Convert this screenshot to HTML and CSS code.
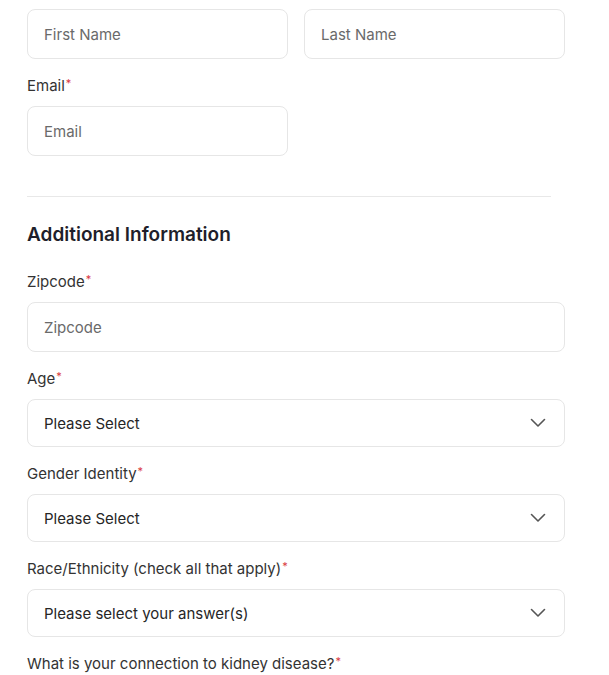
FILE: index.html
```html
<!DOCTYPE html>
<html>
<head>
<meta charset="utf-8">
<link rel="stylesheet" href="styles.css">
</head>
<body>
<form class="form">
  <div class="row">
    <div class="field"><div class="input placeholder">First Name</div></div>
    <div class="field"><div class="input placeholder">Last Name</div></div>
  </div>
  <div class="group">
    <label class="label">Email<span class="req">*</span></label>
    <div class="row">
      <div class="field"><div class="input placeholder">Email</div></div>
      <div class="field"></div>
    </div>
  </div>
  <hr class="divider">
  <h2 class="heading">Additional Information</h2>
  <div class="group group-first">
    <label class="label">Zipcode<span class="req">*</span></label>
    <div class="input placeholder">Zipcode</div>
  </div>
  <div class="group">
    <label class="label">Age<span class="req">*</span></label>
    <div class="input select">Please Select<svg class="chev" width="16" height="10" viewBox="0 0 16 10"><path d="M1.5 1.5 L8 8 L14.5 1.5" fill="none" stroke="#555" stroke-width="1.6" stroke-linecap="round" stroke-linejoin="round"/></svg></div>
  </div>
  <div class="group">
    <label class="label">Gender Identity<span class="req">*</span></label>
    <div class="input select">Please Select<svg class="chev" width="16" height="10" viewBox="0 0 16 10"><path d="M1.5 1.5 L8 8 L14.5 1.5" fill="none" stroke="#555" stroke-width="1.6" stroke-linecap="round" stroke-linejoin="round"/></svg></div>
  </div>
  <div class="group">
    <label class="label">Race/Ethnicity (check all that apply)<span class="req">*</span></label>
    <div class="input select">Please select your answer(s)<svg class="chev" width="16" height="10" viewBox="0 0 16 10"><path d="M1.5 1.5 L8 8 L14.5 1.5" fill="none" stroke="#555" stroke-width="1.6" stroke-linecap="round" stroke-linejoin="round"/></svg></div>
  </div>
  <div class="group">
    <label class="label">What is your connection to kidney disease?<span class="req">*</span></label>
  </div>
</form>
</body>
</html>
```
FILE: styles.css
```css
html, body {
  margin: 0;
  padding: 0;
  background: #fff;
}
body {
  font-family: "Inter", "Liberation Sans", sans-serif;
  color: #333;
}
.form {
  width: 538px;
  padding: 9px 0 0 27px;
  display: flex;
  flex-direction: column;
}
.row {
  display: flex;
  gap: 16px;
}
.field {
  flex: 1;
}
.input {
  box-sizing: border-box;
  height: 50px;
  border: 1px solid #e6e6e6;
  border-radius: 8px;
  padding: 0 16px;
  display: flex;
  align-items: center;
  font-size: 15px;
}
.placeholder {
  color: #6a6a6a;
}
.select {
  height: 48px;
  color: #262626;
  justify-content: space-between;
  padding-right: 18px;
}
.group {
  margin-top: 17px;
}
.group-first {
  margin-top: 25px;
}
.label {
  display: block;
  font-size: 15px;
  line-height: 20px;
  color: #333;
  margin-bottom: 10px;
}
.req {
  color: #d93a3f;
  font-size: 11px;
  vertical-align: top;
  margin-left: 1px;
  line-height: 14px;
}
.divider {
  width: 524px;
  margin: 40px 0 0 0;
  border: none;
  border-top: 1px solid #e8e8e8;
}
.heading {
  margin: 26px 0 0 0;
  font-size: 19px;
  line-height: 24px;
  font-weight: 600;
  color: #1f1f2b;
}
.chev {
  display: block;
}
```
